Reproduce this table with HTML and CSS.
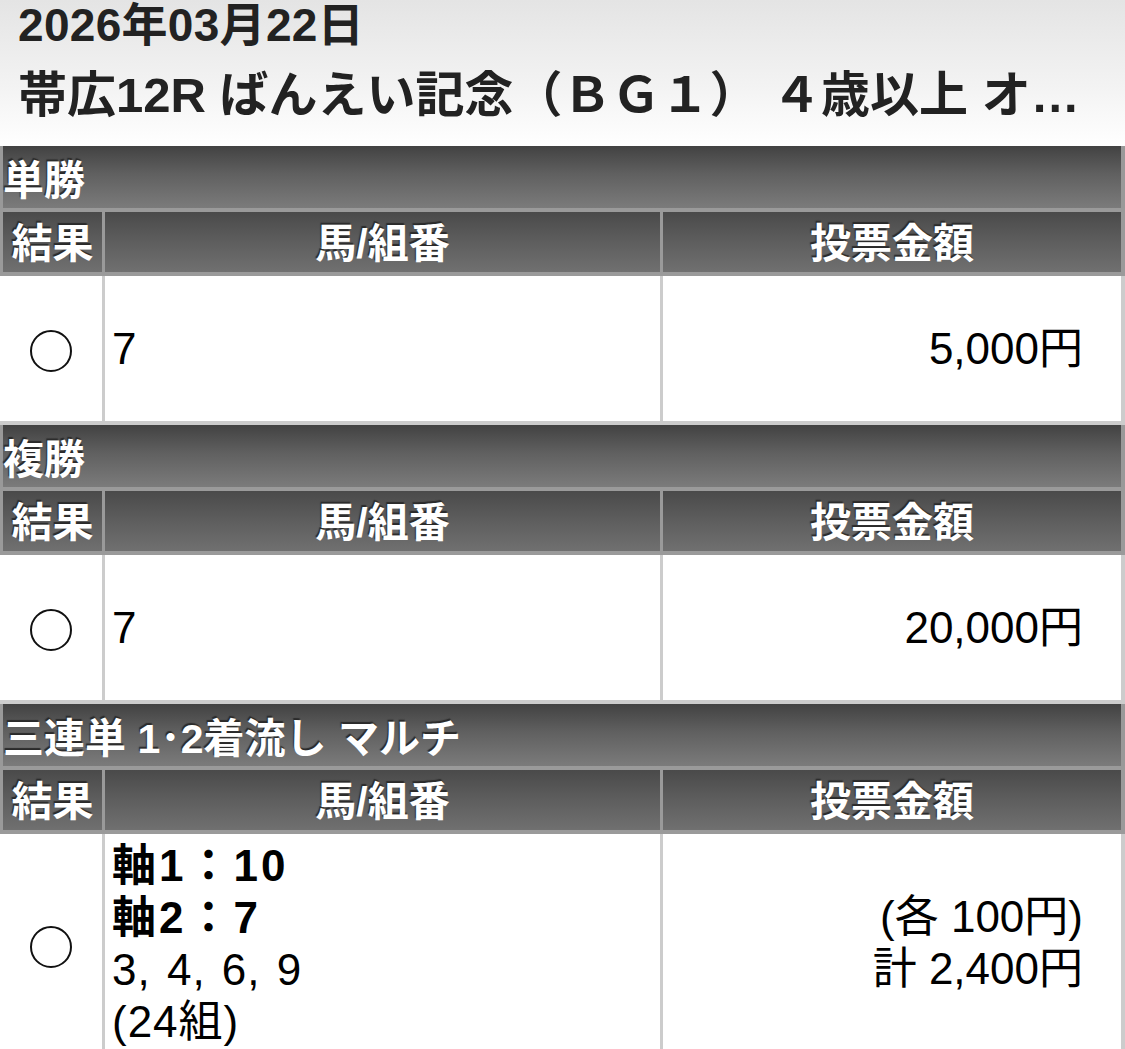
FILE: index.html
```html
<!DOCTYPE html>
<html lang="ja">
<head>
<meta charset="utf-8">
<title>投票内容</title>
<link rel="stylesheet" href="styles.css">
</head>
<body>
<header class="head">
  <div class="date">2026年03月22日</div>
  <div class="race">帯広12R ばんえい記念（ＢＧ１） ４歳以上 オ…</div>
</header>

<section class="bet">
  <div class="bar">単勝</div>
  <div class="cols">
    <div class="col">結果</div>
    <div class="col">馬/組番</div>
    <div class="col">投票金額</div>
  </div>
  <div class="row">
    <div class="cell res"><span class="mark"></span></div>
    <div class="cell num">7</div>
    <div class="cell amt">5,000円</div>
  </div>
</section>

<section class="bet">
  <div class="bar">複勝</div>
  <div class="cols">
    <div class="col">結果</div>
    <div class="col">馬/組番</div>
    <div class="col">投票金額</div>
  </div>
  <div class="row">
    <div class="cell res"><span class="mark"></span></div>
    <div class="cell num">7</div>
    <div class="cell amt">20,000円</div>
  </div>
</section>

<section class="bet">
  <div class="bar">三連単 1･2着流し マルチ</div>
  <div class="cols">
    <div class="col">結果</div>
    <div class="col">馬/組番</div>
    <div class="col">投票金額</div>
  </div>
  <div class="row">
    <div class="cell res"><span class="mark"></span></div>
    <div class="cell num multi">
      <div class="axis">軸1：10</div>
      <div class="axis">軸2：7</div>
      <div class="list">3, 4, 6, 9</div>
      <div class="list">(24組)</div>
    </div>
    <div class="cell amt multi">
      <div>(各 100円)</div>
      <div>計 2,400円</div>
    </div>
  </div>
</section>
</body>
</html>
```

FILE: styles.css
```css
html, body {
  margin: 0;
  padding: 0;
  background: #fff;
}
body {
  font-family: "Liberation Sans", "Noto Sans CJK JP", sans-serif;
  color: #000;
  width: 1125px;
  overflow: hidden;
}
.head {
  height: 146px;
  box-sizing: border-box;
  padding: 0 20px 0 18px;
  background: linear-gradient(to bottom, #e4e4e4 0%, #f3f3f3 60%, #ffffff 100%);
  color: #222;
  font-weight: bold;
}
.date {
  font-size: 46px;
  line-height: 50px;
  padding-top: 0;
  letter-spacing: 0.3px;
}
.race {
  font-size: 49px;
  line-height: 62px;
  margin-top: 14px;
  white-space: nowrap;
  overflow: hidden;
}
.bar {
  height: 62px;
  box-sizing: border-box;
  border-left: 3px solid #999;
  border-right: 4px solid #999;
  background: linear-gradient(to bottom, #424242 0%, #606060 45%, #7b7b7b 100%);
  color: #fff;
  font-weight: bold;
  font-size: 41px;
  line-height: 70px;
  white-space: nowrap;
  text-shadow: -1px -2px 1px #2a2a2a;
}
.cols {
  display: grid;
  grid-template-columns: 99px 555px 458px;
  column-gap: 3px;
  background: #9a9a9a;
  padding: 0 4px 0 3px;
  border-top: 4px solid #9a9a9a;
  border-bottom: 4px solid #9a9a9a;
}
.col {
  height: 60px;
  background: linear-gradient(to bottom, #4a4a4a 0%, #5e5e5e 50%, #707070 100%);
  color: #fff;
  font-weight: bold;
  font-size: 41px;
  line-height: 64px;
  text-align: center;
  white-space: nowrap;
  text-shadow: -1px -2px 1px #2a2a2a;
}
.row {
  display: grid;
  grid-template-columns: 102px 555px 458px;
  column-gap: 3px;
  background: #cccccc;
  padding-right: 4px;
  border-bottom: 4px solid #cccccc;
}
.cell {
  background: #fff;
  min-height: 145px;
  display: flex;
  align-items: center;
  font-size: 44px;
  line-height: 52px;
}
.res {
  justify-content: center;
}
.mark {
  width: 38px;
  height: 38px;
  border: 2px solid #111;
  border-radius: 50%;
  margin-top: 4px;
}
.num {
  padding-left: 7px;
}
.amt {
  justify-content: flex-end;
  padding-right: 38px;
  text-align: right;
}
.multi {
  flex-direction: column;
  align-items: flex-start;
  justify-content: center;
  padding-top: 6px;
  padding-bottom: 8px;
}
.amt.multi {
  align-items: flex-end;
  padding-top: 4px;
}
.axis {
  font-weight: bold;
  letter-spacing: 3px;
}
.list {
  letter-spacing: 1px;
  word-spacing: 3px;
}
```
